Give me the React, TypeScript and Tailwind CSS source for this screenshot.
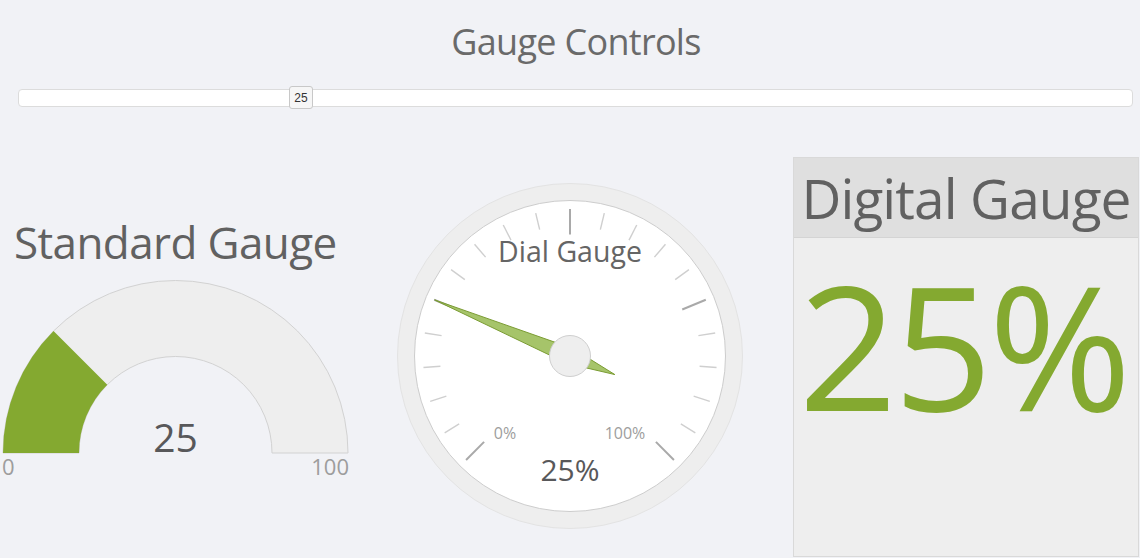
import React from "react";

const GREEN = "#84a930";
const VALUE = 25;

function StandardGauge({ value }: { value: number }) {
  const cx = 175.5;
  const cy = 184;
  const R = 172.5;
  const r = 96.5;
  const a = Math.PI * (1 - value / 100);
  const ox = cx + R * Math.cos(a);
  const oy = cy - R * Math.sin(a);
  const ix = cx + r * Math.cos(a);
  const iy = cy - r * Math.sin(a);
  const track = `M ${cx - R} ${cy} A ${R} ${R} 0 0 1 ${cx + R} ${cy} L ${cx + r} ${cy} A ${r} ${r} 0 0 0 ${cx - r} ${cy} Z`;
  const bar = `M ${cx - R} ${cy} A ${R} ${R} 0 0 1 ${ox} ${oy} L ${ix} ${iy} A ${r} ${r} 0 0 0 ${cx - r} ${cy} Z`;
  return (
    <svg width="352" height="215" viewBox="0 0 352 215" className="block">
      <path d={track} fill="#eeeeee" stroke="#d2d2d2" strokeWidth="1" />
      <path d={bar} fill={GREEN} />
      <text x={cx} y="183" textAnchor="middle" fontSize="39" fill="#58585a" fontFamily="'Open Sans', sans-serif">
        {value}
      </text>
      <text x="2" y="206" fontSize="22" fill="#9d9d9d" fontFamily="'Open Sans', sans-serif">
        0
      </text>
      <text x="349" y="206" textAnchor="end" fontSize="22" fill="#9d9d9d" fontFamily="'Open Sans', sans-serif">
        100
      </text>
    </svg>
  );
}

function DialGauge({ value }: { value: number }) {
  const c = 175;
  const ticks = [] as React.ReactNode[];
  for (let i = 0; i <= 20; i++) {
    const deg = -135 + i * 13.5;
    const t = (deg * Math.PI) / 180;
    const major = i % 5 === 0;
    const r1 = major ? 121.5 : 130;
    const r2 = 147;
    ticks.push(
      <line
        key={i}
        x1={c + r1 * Math.sin(t)}
        y1={c - r1 * Math.cos(t)}
        x2={c + r2 * Math.sin(t)}
        y2={c - r2 * Math.cos(t)}
        stroke={major ? "#a9a9a9" : "#cfcfcf"}
        strokeWidth={major ? 2 : 1.4}
      />
    );
  }
  const deg = -135 + (value / 100) * 270;
  const t = (deg * Math.PI) / 180;
  const ux = Math.sin(t);
  const uy = -Math.cos(t);
  const nx = -uy;
  const ny = ux;
  const tip = [c + 146.5 * ux, c + 146.5 * uy];
  const tail = [c - 48.5 * ux, c - 48.5 * uy];
  const s1 = [c + 8 * nx, c + 8 * ny];
  const s2 = [c - 8 * nx, c - 8 * ny];
  const needle = [tip, s1, tail, s2].map((p) => p.join(",")).join(" ");
  return (
    <svg width="350" height="350" viewBox="0 0 350 350" className="block">
      <circle cx={c} cy={c} r="172.5" fill="#eeeeee" stroke="#e3e3e3" strokeWidth="1" />
      <circle cx={c} cy={c} r="155.5" fill="#ffffff" stroke="#cdcdcd" strokeWidth="1" />
      {ticks}
      <text x={c} y="80.5" textAnchor="middle" fontSize="28.5" fill="#656565" fontFamily="'Open Sans', sans-serif">
        Dial Gauge
      </text>
      <text x="110" y="257.5" textAnchor="middle" fontSize="16" fill="#9d9d9d" fontFamily="'Open Sans', sans-serif">
        0%
      </text>
      <text x="230" y="257.5" textAnchor="middle" fontSize="16" fill="#9d9d9d" fontFamily="'Open Sans', sans-serif">
        100%
      </text>
      <text x={c} y="299.5" textAnchor="middle" fontSize="30" fill="#58585a" fontFamily="'Open Sans', sans-serif">
        {value}%
      </text>
      <polygon points={needle} fill="#a6c46a" stroke="#7b9c33" strokeWidth="1" strokeLinejoin="round" />
      <circle cx={c} cy={c} r="20.5" fill="#eeeeee" stroke="#cfcfcf" strokeWidth="1" />
    </svg>
  );
}

export default function App() {
  return (
    <div className="w-[1140px] h-[558px] overflow-hidden bg-[#f1f2f6] font-['Open_Sans',sans-serif] text-[#646464]">
      <h1 className="pt-[20px] pl-[12px] text-center text-[36px] leading-[43px] tracking-[-0.7px] font-normal text-[#6a6a6a]">
        Gauge Controls
      </h1>

      <div className="relative mt-[26px] ml-[18px] mr-[7px] h-[18px] rounded-[4px] border border-[#dcdcdc] bg-white">
        <div className="absolute left-[270px] top-[-4px] flex h-[23px] w-[24px] items-center justify-center rounded-[3px] border border-[#c8c8c8] bg-[#f6f6f6] font-['Liberation_Sans',sans-serif] text-[12px] text-[#333]">
          {VALUE}
        </div>
      </div>

      <div className="mt-[50px] flex h-[400px]">
        <div className="w-[380px] shrink-0">
          <div className="mt-[59px] pl-[14px] text-[44px] leading-[53px] tracking-[-0.6px] whitespace-nowrap text-[#616161]">
            Standard Gauge
          </div>
          <StandardGauge value={VALUE} />
        </div>

        <div className="flex w-[380px] shrink-0 justify-center">
          <div className="mt-[24px]">
            <DialGauge value={VALUE} />
          </div>
        </div>

        <div className="w-[380px] shrink-0 pl-[33px]">
          <div className="flex h-[400px] w-[346px] flex-col border border-[#d9d9d9] bg-[#eeeeee]">
            <div className="h-[80px] shrink-0 border-b border-[#d4d4d4] bg-[#dfdfdf] text-center text-[55px] leading-[79px] tracking-[-0.9px] whitespace-nowrap text-[#616161]">
              Digital Gauge
            </div>
            <div
              className="pt-[20px] pr-[6px] text-center text-[173px] leading-none tracking-[-4px] whitespace-nowrap"
              style={{ color: GREEN }}
            >
              {VALUE}%
            </div>
          </div>
        </div>
      </div>
    </div>
  );
}
